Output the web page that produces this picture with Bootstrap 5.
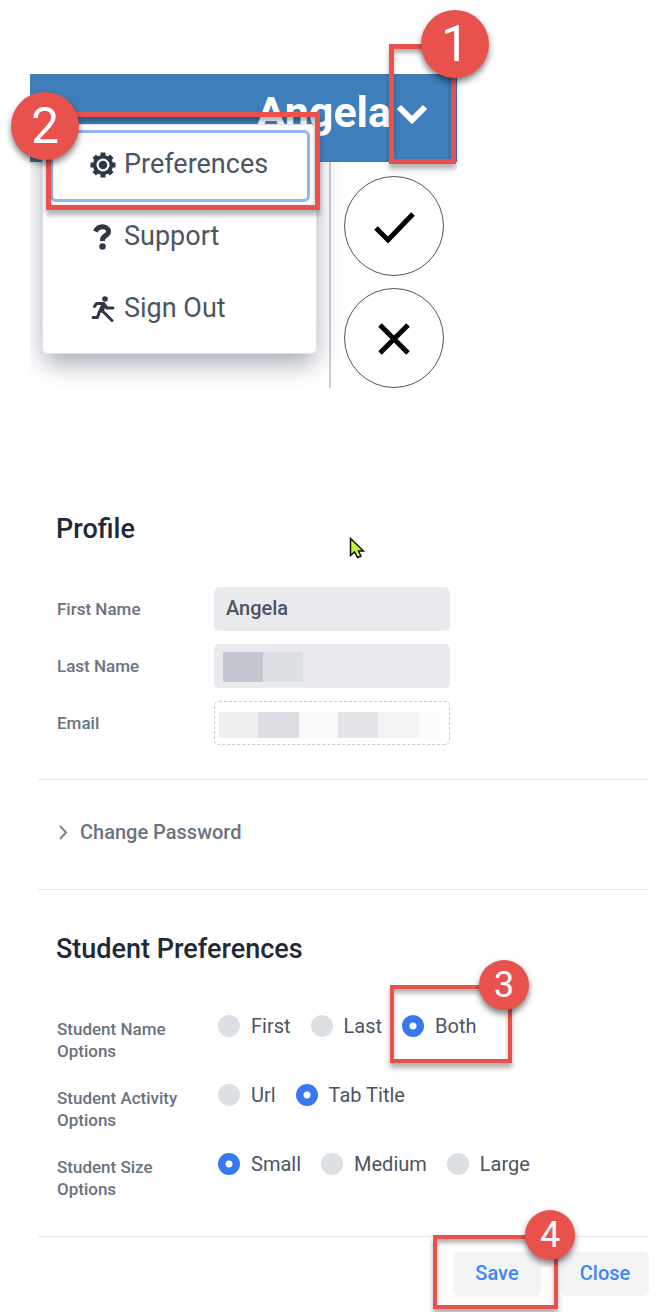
<!DOCTYPE html>
<html lang="en">
<head>
<meta charset="utf-8">
<meta name="viewport" content="width=device-width, initial-scale=1">
<title>Preferences</title>
<link href="https://cdn.jsdelivr.net/npm/bootstrap@5.3.0/dist/css/bootstrap.min.css" rel="stylesheet">
<style>
  body { font-family: Roboto, "Liberation Sans", sans-serif; color: #4b5563; background: #fff; }

  /* Numbered call-outs */
  .callout { position: absolute; border: 4px solid #e9524c; box-shadow: 0 5px 5px rgba(0,0,0,.3), inset 0 4px 4px rgba(0,0,0,.3); pointer-events: none; z-index: 5; }
  .callout-lg { border-width: 5px; }
  .callout-num { position: absolute; display: flex; align-items: center; justify-content: center; width: 50px; height: 50px; top: -29px; right: -21px; border-radius: 50%; background: #e9524c; color: #fff; font-size: 36px; line-height: 1; box-shadow: 0 4px 6px rgba(0,0,0,.5); }
  .callout-lg .callout-num { width: 68px; height: 68px; top: -39px; right: -38px; font-size: 50px; }
  .callout-lg .callout-num.at-start { top: -25px; left: -40px; right: auto; }
  .callout-1 { top: -30px; right: 1px; width: 67px; height: 120px; }
  .callout-2 { top: -13px; left: 3px; right: -4px; height: 98px; }
  .callout-3 { top: -29px; left: -12px; width: 122px; height: 78px; }
  .callout-4 { top: -17px; left: -20px; width: 125px; height: 74px; }

  /* Account menu */
  .account { max-width: 427px; margin: 74px 0 0 30px; position: relative; }
  .account-view { overflow: hidden; position: relative; }
  .account-bar { height: 88px; background: #3d7ebb; padding-right: 29px; padding-bottom: 12px; }
  .account-name { color: #fff; font-size: 43px; font-weight: 700; line-height: 48px; gap: 5px; background: none; border: 0; padding: 0; }
  .account-side { width: 128px; border-left: 2px solid #ccced2; padding: 14px 0 0 13px; gap: 12px; }
  .round-btn { width: 100px; height: 100px; border: 1px solid #555; border-radius: 50%; background: #fff; padding: 0; position: relative; z-index: 1; }
  .menu-shade, .account-menu { position: absolute; left: 12px; top: 50px; width: 275px; height: 230px; border-radius: 6px; }
  .menu-shade { box-shadow: 0 14px 24px -4px rgba(50,60,85,.36), 0 0 30px rgba(50,60,85,.16); }
  .account-menu { background: #fff; border: 1px solid #dfe2e6; padding: 5px 6px 0 7px; }
  .menu-btn { display: flex; align-items: center; width: 100%; height: 72px; padding: 0 0 3px 37px; gap: 8px; font-size: 27px; color: #4b5563; background: #fff; border: 3px solid transparent; border-radius: 6px; }
  .menu-btn.focused { border-color: #93b6f2; }
  .menu-btn svg { width: 26px; height: 26px; color: #2d3748; flex: none; }

  /* Preferences form */
  .prefs { margin: 117px 23px 0 38px; }
  .prefs-part { padding-left: 18px; }
  .prefs h2 { font-size: 27px; font-weight: 500; line-height: 32px; color: #1f2937; margin: 0; }
  .rule { border-top: 1px solid #e5e7eb; }
  .field-name { width: 158px; flex: none; font-size: 17px; font-weight: 500; line-height: 22px; color: #6b7280; padding: 0 30px 0 1px; }
  .text-field { width: 236px; height: 44px; border: 1px solid #e8eaed; border-radius: 5px; background: #e8eaed; padding: 0 11px 2px; font-size: 20px; font-weight: 500; color: #4b5563; }
  .masked-short { background: linear-gradient(90deg, #c3c6cf 50%, #dce0e5 50%) 8px 7px / 80px 30px no-repeat #e8eaed; }
  .masked-long { border: 1px dashed #c7cace; background: linear-gradient(90deg, #edeff0 39px, #dddee3 39px 80px, #f8f9f9 80px 119px, #e3e4e8 119px 159px, #f4f4f4 159px 199px, #fcfcfc 199px) 4px 10px / 221px 26px no-repeat #fff; }
  .disclose { font-size: 20px; font-weight: 500; line-height: 24px; color: #6b7280; background: none; border: 0; padding: 0; gap: 11px; }
  .pick { gap: 11px; font-size: 20px; line-height: 24px; margin-right: 20px; position: relative; }
  .pick input { appearance: none; width: 22px; height: 22px; margin: 0; border-radius: 50%; background: #dcdfe4; flex: none; }
  .pick input:checked { background: radial-gradient(circle, #fff 3px, #3878ee 4px); }
  .option-row { margin-bottom: 21px; }
  .option-row .field-name { padding-top: 4px; }
  .soft-btn { width: 88px; height: 44px; border: 0; border-radius: 6px; background: #f3f4f6; color: #4285f4; font-size: 20px; font-weight: 500; padding: 0 0 2px; }
  .pointer-mark { position: absolute; left: 311px; top: 32px; }
  .profile-fields { gap: 13px; padding: 42px 0 34px; }
  .disclose-part { padding-top: 40px; padding-bottom: 45px; }
  .student-part { padding-top: 43px; }
  .options { padding-top: 49px; padding-bottom: 15px; }
  .picks { padding-left: 4px; }
  .form-foot { padding-top: 15px; gap: 20px; margin-bottom: 16px; }
</style>
</head>
<body>

<section class="account" aria-label="Account menu">
  <div class="account-view">
    <div class="menu-shade"></div>
    <header class="account-bar position-relative d-flex align-items-center justify-content-end">
      <button type="button" class="account-name d-flex align-items-center" aria-expanded="true">Angela
        <svg width="32" height="24" viewBox="0 0 32 24" fill="none" stroke="#fff" stroke-width="6" aria-hidden="true"><path d="M3 7l13 13L29 7"/></svg>
      </button>
    </header>
    <div class="account-side d-flex flex-column ms-auto">
      <button type="button" class="round-btn" aria-label="Accept">
        <svg width="98" height="98" viewBox="0 0 98 98" fill="none" stroke="#000" stroke-width="5" aria-hidden="true"><path d="M31 51l12 12 25-26"/></svg>
      </button>
      <button type="button" class="round-btn" aria-label="Dismiss">
        <svg width="98" height="98" viewBox="0 0 98 98" fill="none" stroke="#000" stroke-width="5" aria-hidden="true"><path d="M35 36l28 28M63 36L35 64"/></svg>
      </button>
    </div>
  </div>

  <nav class="account-menu">
    <button type="button" class="menu-btn focused">
      <svg viewBox="-13 -13 26 26" aria-hidden="true">
        <g stroke="currentColor" stroke-width="5"><path d="M0-12.500V-8M0 12.500V8M-12.500 0H-8M12.500 0H8M-8.800-8.800l3 3M8.800 8.800l-3-3M-8.800 8.800l3-3M8.800-8.800l-3 3"/></g>
        <circle r="8.300" fill="#fff" stroke="currentColor" stroke-width="3.600"/><circle r="4.300" fill="currentColor"/>
      </svg>
      Preferences
    </button>
    <button type="button" class="menu-btn">
      <svg viewBox="0 0 26 26" fill="none" stroke="currentColor" stroke-width="5" aria-hidden="true"><path d="M5.500 7.500C7 4 9.500 2.800 12.500 2.800c3.500 0 6 2 6 4.700 0 4.200-6 4-6 8.500v1"/><circle cx="12.500" cy="22.500" r="3.200" fill="currentColor" stroke="none"/></svg>
      Support
    </button>
    <button type="button" class="menu-btn">
      <svg viewBox="0 0 26 26" fill="none" stroke="currentColor" stroke-width="3" stroke-linecap="round" stroke-linejoin="round" aria-hidden="true"><circle cx="15" cy="3" r="2.800" fill="currentColor" stroke="none"/><path d="M4.500 10.500L6.500 7.500 13.500 7.500 17 12H23"/><path stroke-width="5" d="M13.500 9.500L11.500 14"/><path d="M12.500 15l4.500 4.500 5 5M9.500 15.500l-2 6H3"/></svg>
      Sign Out
    </button>
    <div class="callout callout-lg callout-2"><span class="callout-num at-start">2</span></div>
  </nav>
  <div class="callout callout-lg callout-1"><span class="callout-num">1</span></div>
</section>

<form class="prefs" onsubmit="return false">
  <section class="prefs-part position-relative pt-2">
    <h2>Profile</h2>
    <svg class="pointer-mark" width="16" height="22" viewBox="0 0 16 22" aria-hidden="true"><path d="M1.500 1.500v17l4-3.500 3 5.500 3.500-1.500-2.500-5h5z" fill="#c3fa3f" stroke="#111" stroke-width="1.500"/></svg>
    <div class="d-flex flex-column profile-fields">
      <div class="d-flex align-items-center"><label class="field-name" for="first">First Name</label><input class="text-field" id="first" type="text" value="Angela"></div>
      <div class="d-flex align-items-center"><label class="field-name" for="last">Last Name</label><input class="text-field masked-short" id="last" type="text"></div>
      <div class="d-flex align-items-center"><label class="field-name" for="email">Email</label><input class="text-field masked-long" id="email" type="email" readonly></div>
    </div>
  </section>

  <section class="rule prefs-part disclose-part">
    <button type="button" class="disclose d-flex align-items-center" aria-expanded="false">
      <svg width="13" height="18" viewBox="0 0 13 18" fill="none" stroke="#7b828e" stroke-width="2" aria-hidden="true"><path d="M4 3l6 6.500L4 16"/></svg>
      Change Password
    </button>
  </section>

  <section class="rule prefs-part student-part">
    <h2>Student Preferences</h2>
    <div class="options">
      <div class="option-row d-flex align-items-start" role="radiogroup" aria-labelledby="g-name">
        <span class="field-name" id="g-name">Student Name Options</span>
        <div class="d-flex picks">
          <label class="pick d-flex align-items-center"><input type="radio" name="sname">First</label>
          <label class="pick d-flex align-items-center"><input type="radio" name="sname">Last</label>
          <label class="pick d-flex align-items-center"><input type="radio" name="sname" checked>Both
            <span class="callout callout-3"><span class="callout-num">3</span></span></label>
        </div>
      </div>
      <div class="option-row d-flex align-items-start" role="radiogroup" aria-labelledby="g-act">
        <span class="field-name" id="g-act">Student Activity Options</span>
        <div class="d-flex picks">
          <label class="pick d-flex align-items-center"><input type="radio" name="sact">Url</label>
          <label class="pick d-flex align-items-center"><input type="radio" name="sact" checked>Tab Title</label>
        </div>
      </div>
      <div class="option-row d-flex align-items-start" role="radiogroup" aria-labelledby="g-size">
        <span class="field-name" id="g-size">Student Size Options</span>
        <div class="d-flex picks">
          <label class="pick d-flex align-items-center"><input type="radio" name="ssize" checked>Small</label>
          <label class="pick d-flex align-items-center"><input type="radio" name="ssize">Medium</label>
          <label class="pick d-flex align-items-center"><input type="radio" name="ssize">Large</label>
        </div>
      </div>
    </div>
  </section>

  <footer class="rule d-flex justify-content-end form-foot">
    <div class="position-relative">
      <button type="submit" class="soft-btn">Save</button>
      <div class="callout callout-4"><span class="callout-num">4</span></div>
    </div>
    <button type="button" class="soft-btn">Close</button>
  </footer>
</form>

<script src="https://cdn.jsdelivr.net/npm/bootstrap@5.3.0/dist/js/bootstrap.bundle.min.js"></script>
</body>
</html>
